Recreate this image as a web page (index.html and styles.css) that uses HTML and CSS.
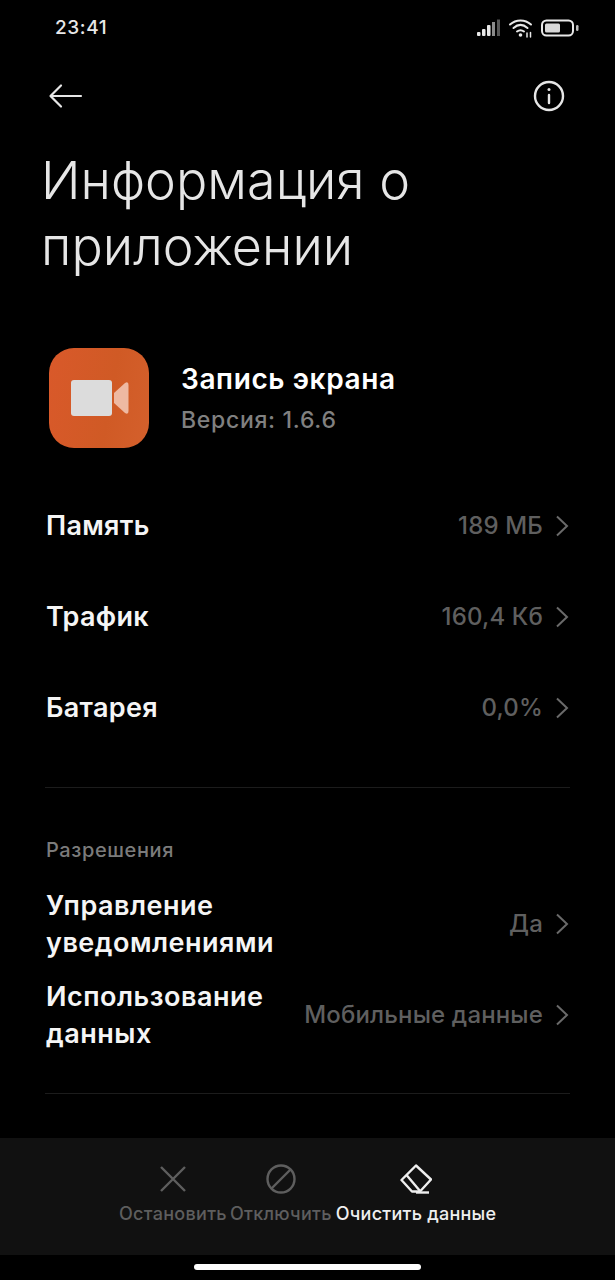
FILE: index.html
```
<!DOCTYPE html>
<html lang="ru">
<head>
<meta charset="utf-8">
<title>Информация о приложении</title>
<link rel="stylesheet" href="styles.css">
</head>
<body>
<div class="phone">
  <div class="status">
    <span class="time">23:41</span>
    <div class="status-icons">
      <svg width="24" height="18" viewBox="0 0 24 18"><rect x="0" y="13" width="3.5" height="4" rx="1" fill="#e8e8e8"/><rect x="5" y="10" width="3.5" height="7" rx="1" fill="#e8e8e8"/><rect x="10" y="6" width="3.5" height="11" rx="1" fill="#e8e8e8"/><rect x="15" y="3" width="3" height="14" fill="#8a8a8a"/><rect x="20" y="0.5" width="3" height="16.5" fill="#555"/></svg>
      <svg width="26" height="20" viewBox="0 0 26 20" fill="none" stroke="#e8e8e8" stroke-width="2" stroke-linecap="round"><path d="M2 6.5C8 1 17 1 23 6.500"/><path d="M5.500 10C10 6 15 6 19.500 10"/><path d="M9 13.500C11 12 14 12 16 13.500"/><circle cx="12.500" cy="17" r="1.800" fill="#e8e8e8" stroke="none"/><path d="M19 15v4M22.500 14.500v4.500" stroke-width="1.500"/></svg>
      <svg width="39" height="18" viewBox="0 0 39 18"><rect x="1" y="1.500" width="31" height="15" rx="4.500" fill="none" stroke="#e8e8e8" stroke-width="2"/><rect x="4" y="4.500" width="15" height="9" rx="1.500" fill="#d8d8d8"/><rect x="35" y="6" width="2.500" height="6" rx="1.200" fill="#bbb"/></svg>
    </div>
  </div>
  <div class="nav">
    <svg class="nav-back" width="36" height="26" viewBox="0 0 36 26" fill="none" stroke="#e6e6e6" stroke-width="2.200" stroke-linecap="round" stroke-linejoin="round"><path d="M33 13H3M13 2.500 2.500 13 13 23.500"/></svg>
    <svg width="34" height="34" viewBox="0 0 34 34" fill="none" stroke="#e6e6e6" stroke-width="2.400" stroke-linecap="round"><circle cx="17" cy="17" r="14"/><path d="M17 16v8"/><circle cx="17" cy="10.500" r="1.500" fill="#e6e6e6" stroke="none"/></svg>
  </div>
  <h1 class="title">Информация о приложении</h1>
  <div class="app">
    <div class="app-icon">
      <svg class="cam" width="58" height="36" viewBox="0 0 58 36"><rect x="0" y="0" width="41" height="36" rx="3" fill="#dcdcdc"/><path d="M43 13 54 3Q57.500 1 57.500 5V31Q57.500 35 54 33L43 23Z" fill="#eeb9a2"/></svg>
    </div>
    <div class="app-text">
      <div class="app-name">Запись экрана</div>
      <div class="app-ver">Версия: 1.6.6</div>
    </div>
  </div>
  <div class="group">
    <div class="row"><span class="label">Память</span><span class="value">189 МБ</span><svg class="chev" width="14" height="22" viewBox="0 0 14 22"><path d="M2 1.500 12 11 2 20.500"/></svg></div>
    <div class="row"><span class="label">Трафик</span><span class="value">160,4 Кб</span><svg class="chev" width="14" height="22" viewBox="0 0 14 22"><path d="M2 1.500 12 11 2 20.500"/></svg></div>
    <div class="row"><span class="label">Батарея</span><span class="value">0,0%</span><svg class="chev" width="14" height="22" viewBox="0 0 14 22"><path d="M2 1.500 12 11 2 20.500"/></svg></div>
  </div>
  <div class="divider"></div>
  <div class="section">Разрешения</div>
  <div class="row-tall"><span class="label">Управление<br>уведомлениями</span><span class="value">Да</span><svg class="chev" width="14" height="22" viewBox="0 0 14 22"><path d="M2 1.500 12 11 2 20.500"/></svg></div>
  <div class="row-tall"><span class="label">Использование<br>данных</span><span class="value">Мобильные данные</span><svg class="chev" width="14" height="22" viewBox="0 0 14 22"><path d="M2 1.500 12 11 2 20.500"/></svg></div>
  <div class="divider divider-low"></div>
  <div class="spacer"></div>
  <div class="actions">
    <div class="action">
      <svg width="30" height="30" viewBox="0 0 30 30" fill="none" stroke="#5e5e5e" stroke-width="2.400"><path d="M3 3 27 27M27 3 3 27"/></svg>
      <span>Остановить</span>
    </div>
    <div class="action">
      <svg width="30" height="30" viewBox="0 0 30 30" fill="none" stroke="#5e5e5e" stroke-width="2.400"><circle cx="15" cy="15" r="13.500"/><path d="M5.500 24.500 24.500 5.500"/></svg>
      <span>Отключить</span>
    </div>
    <div class="action action-clear">
      <svg width="32" height="30" viewBox="0 0 32 30" fill="none" stroke="#efefef" stroke-width="2.400" stroke-linejoin="round"><path d="M16 1.500 31 15.500 20 27.500H12L1.500 16Z"/><path d="M6.500 11 20 27"/><path d="M16 28.500H29"/></svg>
      <span>Очистить данные</span>
    </div>
  </div>
  <div class="home"><div class="home-bar"></div></div>
</div>
</body>
</html>
```
FILE: styles.css
```
* { box-sizing: border-box; }
html, body { margin: 0; padding: 0; background: #000; }
body { font-family: "Inter", "Noto Sans", sans-serif; }
.phone { width: 615px; height: 1280px; display: flex; flex-direction: column; background: #000; color: #f2f2f2; overflow: hidden; }
.status { height: 54px; padding: 17px 35px 0 55px; display: flex; justify-content: space-between; align-items: flex-start; flex: none; }
.time { font-size: 19px; line-height: 22px; font-weight: 500; color: #e8e8e8; letter-spacing: 0.6px; }
.status-icons { display: flex; gap: 7px; align-items: center; height: 24px; margin-top: -1px; }
.nav { height: 84px; padding: 0 49px; display: flex; justify-content: space-between; align-items: center; flex: none; }
.nav-back { margin-left: -1px; }
.title { margin: 0; padding: 10px 30px 0 41px; font-size: 52px; line-height: 66px; font-weight: 300; color: #e6e6e6; flex: none; height: 210px; letter-spacing: 0.05px; }
.app { display: flex; align-items: center; gap: 32px; padding: 0 0 0 49px; height: 100px; flex: none; }
.app-icon { width: 100px; height: 100px; border-radius: 25px; background: linear-gradient(100deg, #d9592a, #d05a25 60%, #d4602c); display: flex; align-items: center; justify-content: center; }
.cam { margin-left: 1px; }
.app-name { font-size: 28px; line-height: 36px; font-weight: 600; color: #fff; letter-spacing: 0.6px; }
.app-ver { font-size: 23px; line-height: 30px; font-weight: 500; color: #808080; margin-top: 8px; letter-spacing: 0.7px; }
.group { padding-top: 32px; flex: none; }
.row { height: 91px; display: flex; align-items: center; padding: 0 46px; }
.label { font-size: 27px; line-height: 37px; font-weight: 600; color: #f5f5f5; letter-spacing: 0.3px; }
.value { margin-left: auto; font-size: 24px; font-weight: 500; color: #5f5f5f; letter-spacing: 0.15px; }
.chev { margin-left: 12px; fill: none; stroke: #6a6a6a; stroke-width: 2; flex: none; }
.divider { height: 1px; margin: 34px 45px 0; background: #1c1c1c; flex: none; }
.divider-low { margin-top: 34px; }
.section { padding: 49px 46px 0; font-size: 20px; line-height: 26px; font-weight: 500; color: #7b7b7b; flex: none; letter-spacing: 0.6px; }
.row-tall { height: 91px; display: flex; align-items: center; padding: 0 46px; flex: none; }
.row-tall .label { letter-spacing: 0.5px; }
.section + .row-tall { margin-top: 15px; }
.row-tall + .divider { margin-top: 33px; }
.spacer { flex: 1; }
.actions { height: 117px; background: #111; display: flex; justify-content: flex-start; align-items: flex-start; gap: 3px; flex: none; padding: 26px 0 0 119px; }
.action { display: flex; flex-direction: column; align-items: center; font-size: 18px; line-height: 24px; font-weight: 500; color: #5e5e5e; gap: 8px; white-space: nowrap; flex: none; letter-spacing: 0.3px; }
.action-clear { color: #efefef; letter-spacing: 0.25px; margin-left: 1px; }
.home { height: 25px; display: flex; justify-content: center; padding-top: 9px; flex: none; }
.home-bar { width: 227px; height: 6px; border-radius: 3px; background: #fff; }
```
